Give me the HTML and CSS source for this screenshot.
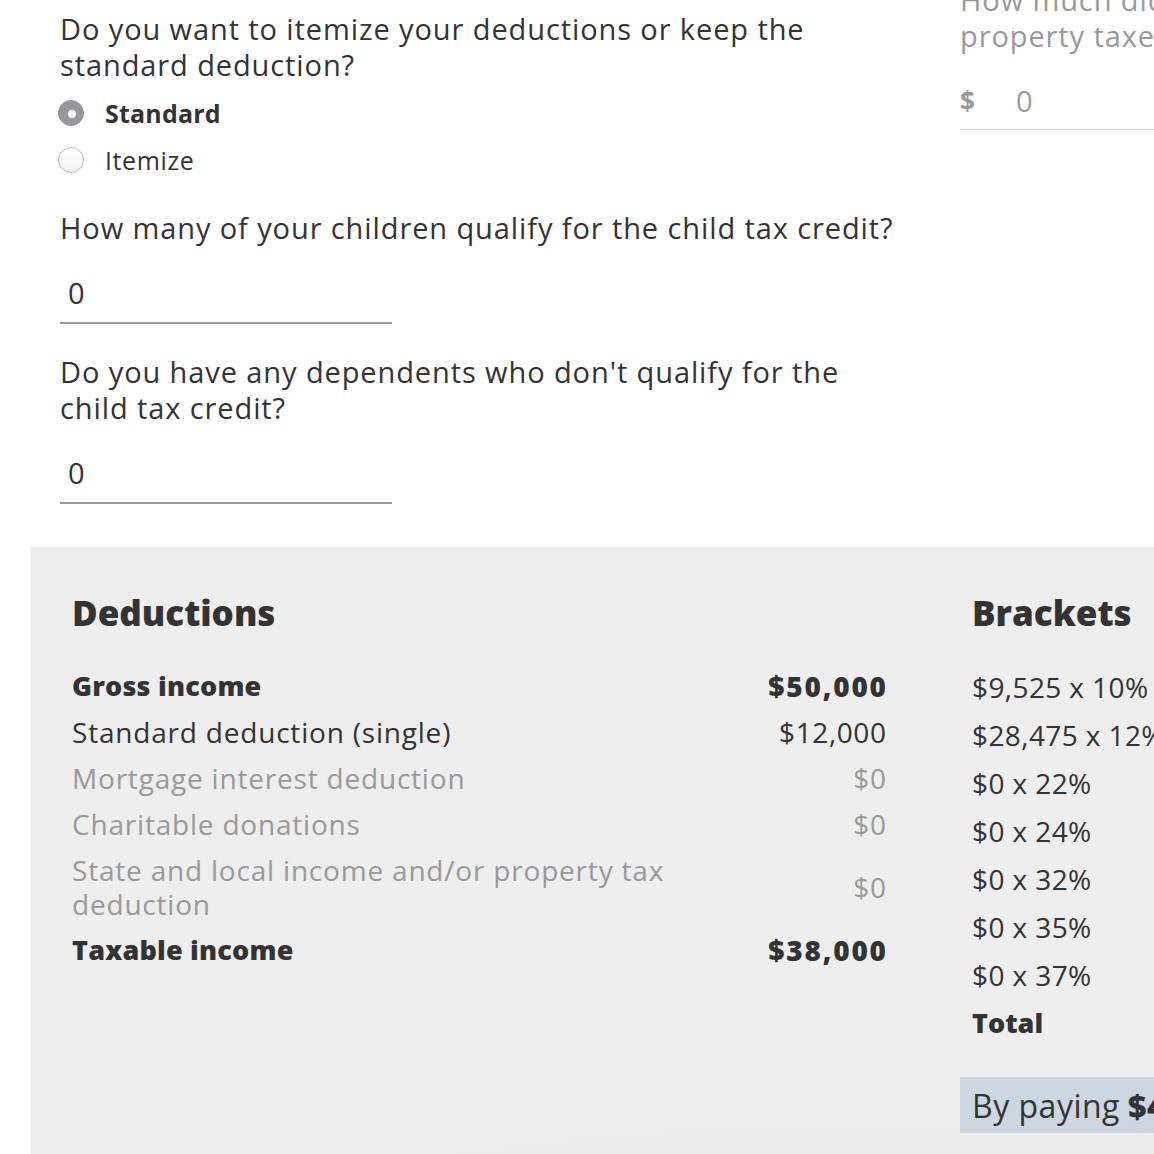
FILE: index.html
```html
<!DOCTYPE html>
<html>
<head>
<meta charset="utf-8">
<link rel="stylesheet" href="styles.css">
</head>
<body>
<div class="page">
  <div class="form">
    <div class="col-left">
      <div class="question">
        <p class="q-text">Do you want to itemize your deductions or keep the standard deduction?</p>
        <div class="radios">
          <label class="radio checked"><span class="dot"></span><span class="r-label">Standard</span></label>
          <label class="radio"><span class="dot"></span><span class="r-label">Itemize</span></label>
        </div>
      </div>
      <div class="question">
        <p class="q-text">How many of your children qualify for the child tax credit?</p>
        <div class="field"><span class="val">0</span></div>
      </div>
      <div class="question">
        <p class="q-text">Do you have any dependents who don't qualify for the child tax credit?</p>
        <div class="field"><span class="val">0</span></div>
      </div>
    </div>
    <div class="col-right">
      <p class="q-text muted">How much did you pay in property taxes?</p>
      <div class="field muted-field"><span class="cur">$</span><span class="val">0</span></div>
    </div>
  </div>
  <div class="panel">
    <div class="deductions">
      <h2>Deductions</h2>
      <div class="row bold"><span class="lbl">Gross income</span><span class="amt">$50,000</span></div>
      <div class="row"><span class="lbl">Standard deduction (single)</span><span class="amt">$12,000</span></div>
      <div class="row muted"><span class="lbl">Mortgage interest deduction</span><span class="amt">$0</span></div>
      <div class="row muted"><span class="lbl">Charitable donations</span><span class="amt">$0</span></div>
      <div class="row muted"><span class="lbl">State and local income and/or property tax deduction</span><span class="amt">$0</span></div>
      <div class="row bold"><span class="lbl">Taxable income</span><span class="amt">$38,000</span></div>
    </div>
    <div class="brackets">
      <h2>Brackets</h2>
      <div class="b-row">$9,525 x 10%</div>
      <div class="b-row">$28,475 x 12%</div>
      <div class="b-row">$0 x 22%</div>
      <div class="b-row">$0 x 24%</div>
      <div class="b-row">$0 x 32%</div>
      <div class="b-row">$0 x 35%</div>
      <div class="b-row">$0 x 37%</div>
      <div class="b-row total">Total</div>
      <div class="summary">By paying <b>$4,</b></div>
    </div>
  </div>
</div>
</body>
</html>
```
FILE: styles.css
```css
html, body {
  margin: 0;
  padding: 0;
  background: #fff;
}
body {
  width: 1154px;
  height: 1154px;
  overflow: hidden;
  font-family: "Open Sans", "Noto Sans", sans-serif;
  color: #333;
}
.page {
  width: 1154px;
}
.form {
  display: grid;
  grid-template-columns: 900px 400px;
  padding-left: 60px;
  padding-top: 11px;
}
.col-left {
  display: flex;
  flex-direction: column;
}
.q-text {
  margin: 0;
  font-size: 29px;
  letter-spacing: 0.9px;
  line-height: 36px;
  color: #333;
  max-width: 845px;
}
.question:nth-child(2) {
  margin-top: 36px;
}
.question:nth-child(3) {
  margin-top: 30px;
}
.radios {
  display: flex;
  flex-direction: column;
  gap: 19px;
  margin-top: 16px;
}
.radio {
  display: flex;
  align-items: center;
  gap: 21px;
  font-size: 25px;
  letter-spacing: 0.6px;
  line-height: 28px;
  margin-left: -2px;
}
.dot {
  width: 26px;
  height: 26px;
  border-radius: 50%;
  border: 1px solid #bbb;
  background: linear-gradient(#fff, #f2f2f2);
  box-sizing: border-box;
  flex: none;
  position: relative;
}
.radio.checked .dot {
  background: #97969b;
  border-color: #97969b;
}
.radio.checked .dot::after {
  content: "";
  position: absolute;
  left: 9px;
  top: 9px;
  width: 8px;
  height: 8px;
  border-radius: 50%;
  background: #fff;
}
.radio.checked .r-label {
  font-weight: 700;
  letter-spacing: 0.2px;
}
.field {
  width: 332px;
  border-bottom: 2px solid #999;
  height: 54px;
  margin-top: 24px;
  display: flex;
  align-items: center;
  font-size: 29px;
  box-sizing: border-box;
  padding: 0 8px 8px;
}
.col-right {
  margin-top: -29px;
  width: 400px;
}
.muted {
  color: #999;
}
.col-right .q-text {
  color: #999;
  max-width: 400px;
}
.muted-field {
  color: #999;
  border-bottom: 1px solid #ccc;
  width: 260px;
  padding: 0 0 4px;
  margin-top: 22px;
  height: 54px;
}
.muted-field .cur {
  width: 56px;
  font-weight: 700;
  font-size: 26px;
}
.panel {
  margin-left: 30px;
  margin-top: 43px;
  background-color: #eee;
  background-image: radial-gradient(ellipse 700px 90px at 75% 100%, rgba(0, 0, 0, 0.035), rgba(0, 0, 0, 0) 100%);
  height: 640px;
  display: grid;
  grid-template-columns: 814px minmax(0, 1fr);
  column-gap: 86px;
  padding-left: 42px;
  padding-top: 44px;
  box-sizing: border-box;
}
h2 {
  margin: 0 0 28px;
  font-size: 35px;
  line-height: 44px;
  font-weight: 800;
  color: #333;
}
.row {
  display: flex;
  justify-content: space-between;
  align-items: center;
  font-size: 28px;
  letter-spacing: 0.8px;
  line-height: 34px;
  padding: 6px 0;
}
.row .lbl {
  max-width: 605px;
}
.row .amt {
  font-size: 28px;
  letter-spacing: 0.6px;
  margin-right: -0.6px;
}
.row.bold {
  font-weight: 800;
  font-size: 27px;
  letter-spacing: 0.2px;
}
.row.bold .amt {
  letter-spacing: 1.8px;
  margin-right: -1.8px;
}
.row.muted {
  color: #999;
}
.brackets {
  min-width: 0;
}
.b-row {
  font-size: 28px;
  letter-spacing: 0.4px;
  line-height: 36px;
  padding: 6px 0;
  white-space: nowrap;
}
.b-row.total {
  font-weight: 800;
  font-size: 27px;
  letter-spacing: 0;
}
.summary {
  margin-top: 30px;
  margin-left: -12px;
  background: #ccd7e1;
  height: 56px;
  display: flex;
  align-items: center;
  padding-left: 12px;
  font-size: 32px;
  letter-spacing: 0.5px;
  white-space: nowrap;
  width: 300px;
}
.summary b {
  font-weight: 800;
  margin-left: 8px;
}
```
